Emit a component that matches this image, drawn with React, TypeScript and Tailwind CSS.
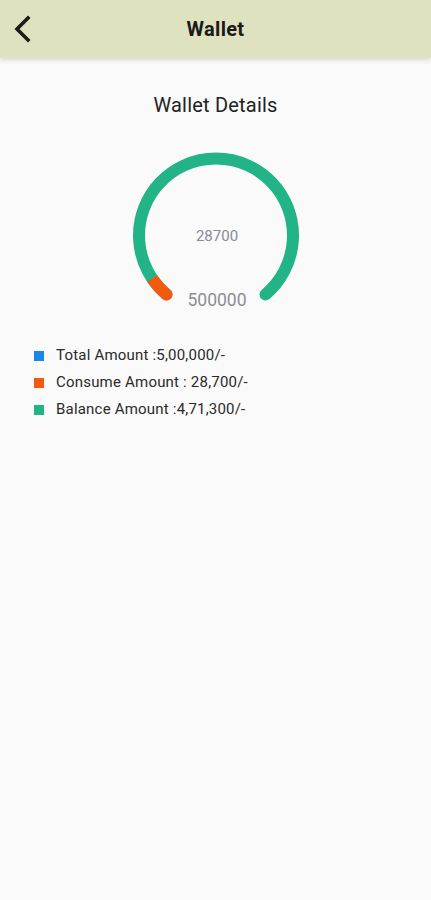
import React from "react";

const CX = 90;
const CY = 95.5;
const R = 77;

function pt(angleDeg: number) {
  const a = (angleDeg * Math.PI) / 180;
  return { x: CX + R * Math.sin(a), y: CY - R * Math.cos(a) };
}

function arc(start: number, end: number) {
  const s = pt(start);
  const e = pt(end);
  const large = end - start > 180 ? 1 : 0;
  return `M ${s.x} ${s.y} A ${R} ${R} 0 ${large} 1 ${e.x} ${e.y}`;
}

export default function App() {
  const start = -140;
  const end = 140;
  const consumed = 28700 / 500000;
  const oEnd = start + (end - start) * consumed;
  const sp = pt(start);
  return (
    <div
      className="min-h-[900px] w-full bg-[#fafafa]"
      style={{ fontFamily: "Roboto, 'Noto Sans', sans-serif" }}
    >
      <div className="relative flex h-[58px] items-center justify-center bg-[#dfe2bf] shadow-[0_2px_5px_rgba(0,0,0,0.15)]">
        <svg
          className="absolute left-[11px] top-[15px]"
          width="22"
          height="28"
          viewBox="0 0 22 28"
          fill="none"
        >
          <path
            d="M17 3 L6 14 L17 25"
            stroke="#1c1c1c"
            strokeWidth="3.6"
            strokeLinecap="square"
            strokeLinejoin="miter"
          />
        </svg>
        <span className="text-[20px] font-bold tracking-[0.3px] text-[#1a1a1a]">Wallet</span>
      </div>

      <div className="pt-[36px] text-center text-[20px] leading-[22px] tracking-[0.2px] text-[#222]">
        Wallet Details
      </div>

      <div className="mt-[24px] flex justify-center pl-[1px]">
        <svg width="180" height="175" viewBox="0 0 180 175">
          <path
            d={arc(start, end)}
            stroke="#22b386"
            strokeWidth="12"
            fill="none"
            strokeLinecap="round"
          />
          <path
            d={arc(start, oEnd)}
            stroke="#f35a10"
            strokeWidth="12"
            fill="none"
            strokeLinecap="butt"
          />
          <circle cx={sp.x} cy={sp.y} r="6" fill="#f35a10" />
          <text
            x={CX + 1}
            y={CY + 5}
            textAnchor="middle"
            fontSize="15"
            fill="#8a8a96"
            fontFamily="Roboto, sans-serif"
          >
            28700
          </text>
          <text
            x={CX + 1}
            y={166}
            textAnchor="middle"
            fontSize="17.5"
            fill="#8d8d95"
            fontFamily="Roboto, sans-serif"
          >
            500000
          </text>
        </svg>
      </div>

      <div className="mt-[27px] flex flex-col pl-[34px] text-[15px] tracking-[0.2px] text-[#2a2a2a]">
        <div className="flex h-[27px] items-center">
          <span className="mr-[12px] h-[10px] w-[10px] bg-[#1b86e8]" />
          <span>Total Amount :5,00,000/-</span>
        </div>
        <div className="flex h-[27px] items-center">
          <span className="mr-[12px] h-[10px] w-[10px] bg-[#f35a10]" />
          <span>Consume Amount : 28,700/-</span>
        </div>
        <div className="flex h-[27px] items-center">
          <span className="mr-[12px] h-[10px] w-[10px] bg-[#22b386]" />
          <span>Balance Amount :4,71,300/-</span>
        </div>
      </div>
    </div>
  );
}
